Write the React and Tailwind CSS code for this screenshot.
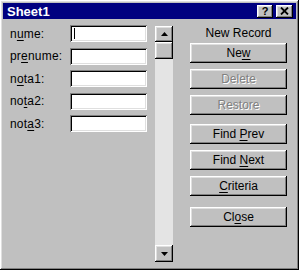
const raised =
  'shadow-[inset_-1px_-1px_#000,inset_1px_1px_#fff,inset_-2px_-2px_#808080,inset_2px_2px_#dfdfdf]';
const sunken =
  'shadow-[inset_1px_1px_#808080,inset_-1px_-1px_#fff,inset_2px_2px_#000,inset_-2px_-2px_#dfdfdf]';

const fields = [
  { pre: 'n', key: 'u', post: 'me:' },
  { pre: 'pr', key: 'e', post: 'nume:' },
  { pre: 'n', key: 'o', post: 'ta1:' },
  { pre: 'no', key: 't', post: 'a2:' },
  { pre: 'not', key: 'a', post: '3:' },
];

const Btn = ({ pre = '', k = '', post = '', disabled, className = '' }) => (
  <div
    className={`h-[20px] w-[97px] flex items-center justify-center bg-[#c0c0c0] ${raised} ${className}`}
  >
    <span
      className={
        disabled
          ? 'text-[#808080] [text-shadow:1px_1px_0_#fff]'
          : 'text-black'
      }
    >
      {pre}
      {k && <span className="underline underline-offset-2">{k}</span>}
      {post}
    </span>
  </div>
);

export default function App() {
  return (
    <div
      className={`w-[299px] h-[270px] bg-[#c0c0c0] p-[3px] flex flex-col text-[12px] leading-none ${raised}`}
      style={{ fontFamily: '"Liberation Sans", Arial, sans-serif' }}
    >
      {/* title bar */}
      <div className="h-[16px] bg-[#000080] flex items-center pl-[4px] pr-[3px]">
        <span className="text-white font-bold text-[13px] flex-1">Sheet1</span>
        <div
          className={`w-[16px] h-[13px] bg-[#c0c0c0] flex items-center justify-center font-bold text-[11px] ${raised}`}
        >
          ?
        </div>
        <div
          className={`w-[17px] h-[13px] ml-[3px] bg-[#c0c0c0] flex items-center justify-center ${raised}`}
        >
          <svg width="9" height="8" viewBox="0 0 9 8">
            <path d="M1 0.5 L8 7.5 M8 0.5 L1 7.5" stroke="#000" strokeWidth="1.8" />
          </svg>
        </div>
      </div>

      <div className="flex flex-1 pt-[6px]">
        {/* labels + inputs */}
        <div className="flex flex-col gap-[5.5px] w-[149px] pl-[7px] tracking-[0.2px]">
          {fields.map((f, i) => (
            <div key={i} className="flex items-center h-[17px]">
              <span className="w-[60px]">
                {f.pre}
                <span className="underline underline-offset-2">{f.key}</span>
                {f.post}
              </span>
              <div className={`w-[77px] h-[17px] bg-white relative ${sunken}`}>
                {i === 0 && (
                  <div className="absolute left-[4px] top-[3px] w-[1px] h-[11px] bg-black" />
                )}
              </div>
            </div>
          ))}
        </div>

        {/* scrollbar */}
        <div className="w-[18px] ml-[3px] mt-[1px] h-[236px] flex flex-col bg-[#e4e4e4]">
          <div className={`h-[16px] bg-[#c0c0c0] flex items-center justify-center ${raised}`}>
            <svg width="7" height="4" viewBox="0 0 7 4">
              <path d="M3.5 0 L7 4 L0 4 Z" fill="#000" />
            </svg>
          </div>
          <div className={`h-[17px] bg-[#c0c0c0] ${raised}`} />
          <div className="flex-1" />
          <div className={`h-[17px] bg-[#c0c0c0] flex items-center justify-center ${raised}`}>
            <svg width="7" height="4" viewBox="0 0 7 4">
              <path d="M0 0 L7 0 L3.5 4 Z" fill="#000" />
            </svg>
          </div>
        </div>

        {/* buttons */}
        <div className="flex flex-col ml-[17px] pt-[2px]">
          <div className="h-[14px] w-[97px] text-center">New Record</div>
          <Btn pre="Ne" k="w" className="mt-[2px]" />
          <Btn pre="Delete" disabled className="mt-[6px]" />
          <Btn pre="Restore" disabled className="mt-[6px]" />
          <Btn pre="Find " k="P" post="rev" className="mt-[9px]" />
          <Btn pre="Find " k="N" post="ext" className="mt-[6px]" />
          <Btn k="C" post="riteria" className="mt-[6px]" />
          <Btn pre="Cl" k="o" post="se" className="mt-[11px]" />
        </div>
      </div>
    </div>
  );
}
